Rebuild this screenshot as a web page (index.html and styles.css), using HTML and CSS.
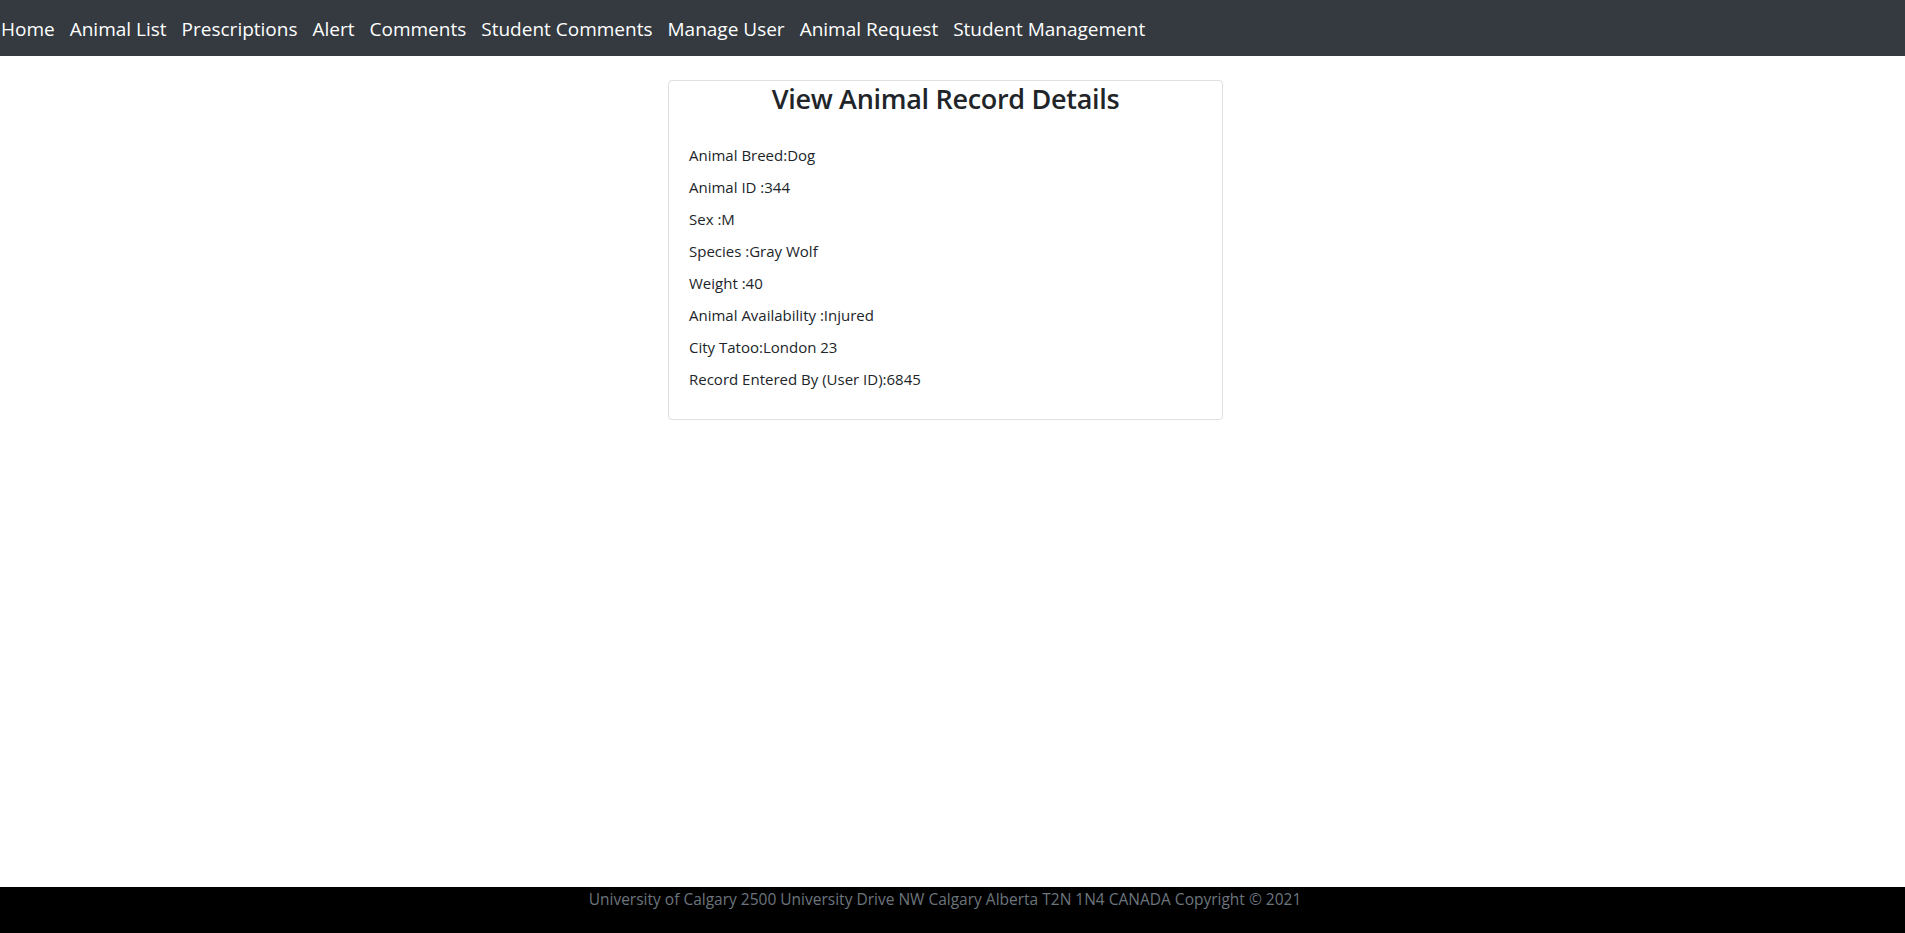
FILE: index.html
```html
<!DOCTYPE html>
<html lang="en">
<head>
<meta charset="utf-8">
<title>View Animal Record Details</title>
<link rel="stylesheet" href="styles.css">
</head>
<body>
<nav class="navbar">
  <a class="nav-link" href="#">Home</a>
  <a class="nav-link" href="#">Animal List</a>
  <a class="nav-link" href="#">Prescriptions</a>
  <a class="nav-link" href="#">Alert</a>
  <a class="nav-link" href="#">Comments</a>
  <a class="nav-link" href="#">Student Comments</a>
  <a class="nav-link" href="#">Manage User</a>
  <a class="nav-link" href="#">Animal Request</a>
  <a class="nav-link" href="#">Student Management</a>
</nav>
<main class="main">
  <div class="card">
    <h3 class="card-title">View Animal Record Details</h3>
    <div class="card-body">
      <p class="field">Animal Breed:Dog</p>
      <p class="field">Animal ID :344</p>
      <p class="field">Sex :M</p>
      <p class="field">Species :Gray Wolf</p>
      <p class="field">Weight :40</p>
      <p class="field">Animal Availability :Injured</p>
      <p class="field">City Tatoo:London 23</p>
      <p class="field">Record Entered By (User ID):6845</p>
    </div>
  </div>
</main>
<footer class="footer">
  <p class="footer-text">University of Calgary 2500 University Drive NW Calgary Alberta T2N 1N4 CANADA Copyright © 2021</p>
</footer>
</body>
</html>
```

FILE: styles.css
```css
html, body {
  margin: 0;
  padding: 0;
  height: 100%;
}
body {
  font-family: "Open Sans", "Noto Sans", sans-serif;
  font-size: 16px;
  line-height: 1.5;
  color: #212529;
  background: #fff;
  display: flex;
  flex-direction: column;
}
.navbar {
  background: #343a40;
  height: 56px;
  box-sizing: border-box;
  display: flex;
  align-items: center;
  gap: 15px;
  padding: 2px 0 0 1px;
  flex-shrink: 0;
}
.nav-link {
  color: #fff;
  text-decoration: none;
  font-size: 19px;
  line-height: 28px;
}
.main {
  flex: 1;
  display: flex;
  justify-content: center;
  align-items: flex-start;
  padding: 24px 14px 0 0;
}
.card {
  width: 555px;
  box-sizing: border-box;
  border: 1px solid rgba(0,0,0,.125);
  border-radius: 4px;
  padding: 0 20px 24px;
}
.card-title {
  margin: 0;
  text-align: center;
  font-size: 27px;
  font-weight: 600;
  letter-spacing: -0.3px;
  line-height: 36px;
  padding-top: 0;
}
.card-body {
  padding-top: 22px;
}
.field {
  margin: 0;
  font-size: 15px;
  line-height: 32px;
}
.footer {
  background: #000;
  height: 46px;
  flex-shrink: 0;
  display: flex;
  justify-content: center;
  padding-right: 15px;
}
.footer-text {
  margin: 0;
  color: #6c757d;
  font-size: 15.5px;
  line-height: 24px;
}
```
